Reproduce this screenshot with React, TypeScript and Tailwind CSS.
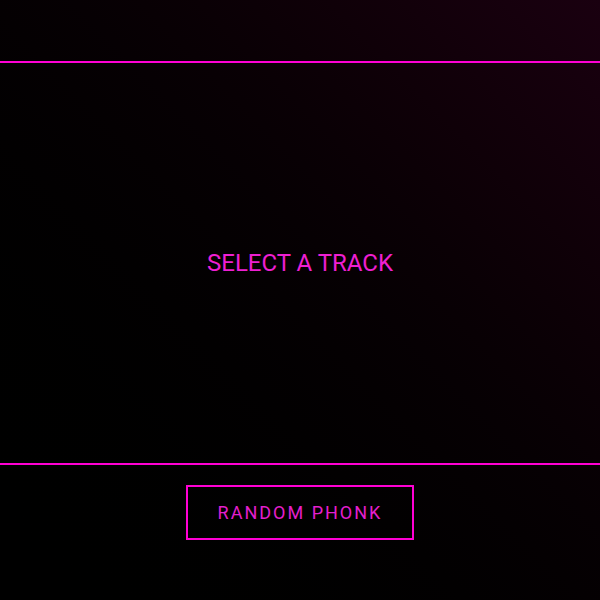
import React from 'react';

const App = () => {
  return (
    <div
      className="w-[600px] h-[600px] flex flex-col bg-gradient-to-tr from-[#000000] to-[#1a0010] text-[#ee1fd2]"
      style={{ fontFamily: 'Roboto, "Liberation Sans", sans-serif' }}
    >
      <header className="h-[63px] shrink-0 border-b-2 border-[#ff00d4]" />

      <main className="flex-1 flex items-center justify-center">
        <h1 className="text-[24px] font-normal">SELECT A TRACK</h1>
      </main>

      <footer className="h-[137px] shrink-0 border-t-2 border-[#ff00d4] flex justify-center pt-[20px]">
        <button className="w-[228px] h-[55px] border-2 border-[#ff00d4] text-[18px] tracking-[2px] text-[#e41fce]">
          RANDOM PHONK
        </button>
      </footer>
    </div>
  );
};

export default App;
